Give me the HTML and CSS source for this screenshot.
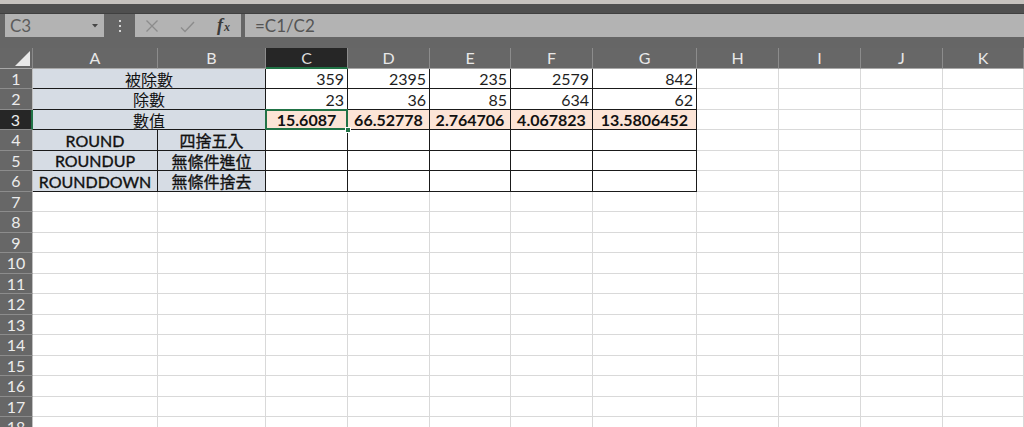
FILE: index.html
```html
<!DOCTYPE html>
<html lang="zh-Hant">
<head>
<meta charset="utf-8">
<title>Excel</title>
<link rel="stylesheet" href="styles.css">
</head>
<body>
<div class="app">
  <div class="titlestrip"></div>
  <div class="darkband"></div>
  <div class="toolbar">
    <div class="namebox"><span class="nb-text">C3</span><svg class="nb-caret" width="6" height="4" viewBox="0 0 6 4"><polygon points="0,0 6,0 3,3.5" fill="#474747"/></svg></div>
    <div class="grip"><i></i><i></i><i></i></div>
    <div class="fxbox">
      <svg class="ic-x" width="14" height="14" viewBox="0 0 14 14"><path d="M1.5 1.5 L12.5 12.5 M12.5 1.5 L1.5 12.5" stroke="#8c8c8c" stroke-width="1.3" fill="none"/></svg>
      <svg class="ic-ok" width="15" height="12" viewBox="0 0 15 12"><path d="M1 6.5 L5 10.5 L14 1" stroke="#8c8c8c" stroke-width="1.4" fill="none"/></svg>
      <span class="ic-fx"><span class="fx-f">f</span><span class="fx-x">x</span></span>
    </div>
    <div class="formula">=C1/C2</div>
  </div>
  <div class="sheet">
    <!-- header row -->
    <div class="corner"><svg width="15" height="15" viewBox="0 0 15 15"><polygon points="0,15 15,15 15,0" fill="#e9e9e9"/></svg></div>
    <div class="ch">A</div><div class="ch">B</div><div class="ch ch-sel">C</div><div class="ch">D</div><div class="ch">E</div><div class="ch">F</div><div class="ch">G</div><div class="ch">H</div><div class="ch">I</div><div class="ch">J</div><div class="ch">K</div>

    <!-- row 1 -->
    <div class="rh">1</div>
    <div class="c lbl span2">被除數</div>
    <div class="c bk num">359</div><div class="c bk num">2395</div><div class="c bk num">235</div><div class="c bk num">2579</div><div class="c bk num">842</div>
    <div class="c"></div><div class="c"></div><div class="c"></div><div class="c"></div>

    <!-- row 2 -->
    <div class="rh">2</div>
    <div class="c lbl span2">除數</div>
    <div class="c bk num">23</div><div class="c bk num">36</div><div class="c bk num">85</div><div class="c bk num">634</div><div class="c bk num">62</div>
    <div class="c"></div><div class="c"></div><div class="c"></div><div class="c"></div>

    <!-- row 3 -->
    <div class="rh rh-sel">3</div>
    <div class="c lbl span2">數值</div>
    <div class="c bk val active">15.6087<span class="handle"></span></div><div class="c bk val">66.52778</div><div class="c bk val">2.764706</div><div class="c bk val">4.067823</div><div class="c bk val">13.5806452</div>
    <div class="c"></div><div class="c"></div><div class="c"></div><div class="c"></div>

    <!-- row 4 -->
    <div class="rh">4</div>
    <div class="c lbl strong">ROUND</div><div class="c lbl strong">四捨五入</div>
    <div class="c bk"></div><div class="c bk"></div><div class="c bk"></div><div class="c bk"></div><div class="c bk"></div>
    <div class="c"></div><div class="c"></div><div class="c"></div><div class="c"></div>

    <!-- row 5 -->
    <div class="rh">5</div>
    <div class="c lbl strong">ROUNDUP</div><div class="c lbl strong">無條件進位</div>
    <div class="c bk"></div><div class="c bk"></div><div class="c bk"></div><div class="c bk"></div><div class="c bk"></div>
    <div class="c"></div><div class="c"></div><div class="c"></div><div class="c"></div>

    <!-- row 6 -->
    <div class="rh">6</div>
    <div class="c lbl strong">ROUNDDOWN</div><div class="c lbl strong">無條件捨去</div>
    <div class="c bk"></div><div class="c bk"></div><div class="c bk"></div><div class="c bk"></div><div class="c bk"></div>
    <div class="c"></div><div class="c"></div><div class="c"></div><div class="c"></div>

    <div class="rh">7</div><div class="c"></div><div class="c"></div><div class="c"></div><div class="c"></div><div class="c"></div><div class="c"></div><div class="c"></div><div class="c"></div><div class="c"></div><div class="c"></div><div class="c"></div>
    <div class="rh">8</div><div class="c"></div><div class="c"></div><div class="c"></div><div class="c"></div><div class="c"></div><div class="c"></div><div class="c"></div><div class="c"></div><div class="c"></div><div class="c"></div><div class="c"></div>
    <div class="rh">9</div><div class="c"></div><div class="c"></div><div class="c"></div><div class="c"></div><div class="c"></div><div class="c"></div><div class="c"></div><div class="c"></div><div class="c"></div><div class="c"></div><div class="c"></div>
    <div class="rh">10</div><div class="c"></div><div class="c"></div><div class="c"></div><div class="c"></div><div class="c"></div><div class="c"></div><div class="c"></div><div class="c"></div><div class="c"></div><div class="c"></div><div class="c"></div>
    <div class="rh">11</div><div class="c"></div><div class="c"></div><div class="c"></div><div class="c"></div><div class="c"></div><div class="c"></div><div class="c"></div><div class="c"></div><div class="c"></div><div class="c"></div><div class="c"></div>
    <div class="rh">12</div><div class="c"></div><div class="c"></div><div class="c"></div><div class="c"></div><div class="c"></div><div class="c"></div><div class="c"></div><div class="c"></div><div class="c"></div><div class="c"></div><div class="c"></div>
    <div class="rh">13</div><div class="c"></div><div class="c"></div><div class="c"></div><div class="c"></div><div class="c"></div><div class="c"></div><div class="c"></div><div class="c"></div><div class="c"></div><div class="c"></div><div class="c"></div>
    <div class="rh">14</div><div class="c"></div><div class="c"></div><div class="c"></div><div class="c"></div><div class="c"></div><div class="c"></div><div class="c"></div><div class="c"></div><div class="c"></div><div class="c"></div><div class="c"></div>
    <div class="rh">15</div><div class="c"></div><div class="c"></div><div class="c"></div><div class="c"></div><div class="c"></div><div class="c"></div><div class="c"></div><div class="c"></div><div class="c"></div><div class="c"></div><div class="c"></div>
    <div class="rh">16</div><div class="c"></div><div class="c"></div><div class="c"></div><div class="c"></div><div class="c"></div><div class="c"></div><div class="c"></div><div class="c"></div><div class="c"></div><div class="c"></div><div class="c"></div>
    <div class="rh">17</div><div class="c"></div><div class="c"></div><div class="c"></div><div class="c"></div><div class="c"></div><div class="c"></div><div class="c"></div><div class="c"></div><div class="c"></div><div class="c"></div><div class="c"></div>
    <div class="rh">18</div><div class="c"></div><div class="c"></div><div class="c"></div><div class="c"></div><div class="c"></div><div class="c"></div><div class="c"></div><div class="c"></div><div class="c"></div><div class="c"></div><div class="c"></div>
  </div>
</div>
</body>
</html>
```

FILE: styles.css
```css
* { box-sizing: border-box; }
html, body { margin: 0; padding: 0; }
body {
  width: 1024px;
  height: 427px;
  overflow: hidden;
  background: #ffffff;
  font-family: "Lato", "Noto Sans CJK TC", sans-serif;
}
.app { width: 1024px; height: 427px; overflow: hidden; }

.titlestrip { height: 4px; background: #c6c2be; }
.darkband { height: 10px; background: #4f4f4f; border-bottom: 1px solid #404040; }

.toolbar {
  height: 34px;
  background: #666666;
  display: flex;
  align-items: flex-start;
  padding-top: 0;
}
.namebox {
  margin-left: 5px;
  width: 99px;
  height: 23px;
  background: #b3b3b3;
  display: flex;
  align-items: center;
  justify-content: space-between;
  padding: 0 6px 0 5px;
}
.nb-text { font-size: 17px; color: #5c5c5c; line-height: 1; }
.nb-caret { display: block; margin-top: 1px; }

.grip {
  width: 31px;
  height: 23px;
  display: flex;
  flex-direction: column;
  align-items: center;
  justify-content: center;
  gap: 3px;
}
.grip i { display: block; width: 2px; height: 2px; background: #d4d4d4; }

.fxbox {
  width: 106px;
  height: 23px;
  background: #b3b3b3;
  display: flex;
  align-items: center;
  padding-left: 10px;
}
.ic-x { display: block; }
.ic-ok { display: block; margin-left: 21px; margin-top: 2px; }
.ic-fx {
  margin-left: 22px;
  font-family: "Liberation Serif", "DejaVu Serif", serif;
  font-style: italic;
  color: #3a3a3a;
  display: flex;
  align-items: baseline;
}
.fx-f { font-size: 18px; font-weight: bold; }
.fx-x { font-size: 12px; font-weight: bold; margin-left: 1px; }

.formula {
  flex: 1;
  margin-left: 4px;
  height: 23px;
  background: #b3b3b3;
  font-size: 17px;
  color: #555555;
  display: flex;
  align-items: center;
  padding-left: 10px;
}

.sheet {
  display: grid;
  grid-template-columns: 33px 125px 108px 82px 82px 81px 82px 104px 82px 82px 82px 81px;
  grid-template-rows: 20.5px repeat(18, 20.5px);
}

.corner {
  background: #676767;
  border-right: 1px solid #8a8a8a;
  border-bottom: 1px solid #a8a8a8;
  display: flex;
  align-items: flex-end;
  justify-content: flex-end;
  padding: 0 2px 2px 0;
}
.corner svg { display: block; }

.ch {
  background: #676767;
  color: #e8e8e8;
  font-size: 16px;
  display: flex;
  align-items: center;
  justify-content: center;
  border-right: 1px solid #8c8c8c;
  border-bottom: 1px solid #a8a8a8;
}
.ch-sel {
  background: #262626;
  border-bottom: 2px solid #217346;
  color: #dcdcdc;
}

.rh {
  background: #676767;
  color: #ececec;
  font-size: 16px;
  display: flex;
  align-items: center;
  justify-content: center;
  border-bottom: 1px solid #8c8c8c;
  border-right: 1px solid #c0c0c0;
}
.rh-sel {
  background: #262626;
  border-right: 2px solid #217346;
}

.c {
  background: #ffffff;
  border-right: 1px solid #d9d9d9;
  border-bottom: 1px solid #d9d9d9;
  font-size: 16px;
  color: #111111;
  display: flex;
  align-items: center;
  padding: 1px 3px 0 3px;
  white-space: nowrap;
  overflow: visible;
  position: relative;
}
.bk {
  border-right-color: #1a1a1a;
  border-bottom-color: #1a1a1a;
}
.num { justify-content: flex-end; color: #1e1e1e; }
.lbl {
  background: #d6dce4;
  border-right-color: #1a1a1a;
  border-bottom-color: #1a1a1a;
  justify-content: center;
  color: #111111;
}
.span2 { grid-column: span 2; }
.strong { -webkit-text-stroke: 0.35px #111111; }
.val {
  background: #fce4d6;
  font-weight: bold;
  justify-content: center;
  color: #111111;
}
.active::after {
  content: "";
  position: absolute;
  left: -1px;
  top: -1px;
  right: -1px;
  bottom: -1px;
  border: 2px solid #217346;
  pointer-events: none;
}
.handle {
  position: absolute;
  right: -4px;
  bottom: -4px;
  width: 6px;
  height: 6px;
  background: #217346;
  border: 1px solid #ffffff;
  z-index: 2;
}
```
